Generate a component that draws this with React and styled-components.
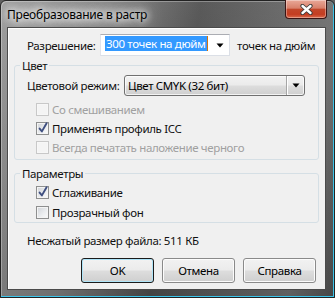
import React from "react";
import styled, { createGlobalStyle } from "styled-components";

const GlobalStyle = createGlobalStyle`
  html, body { margin: 0; padding: 0; background: #5e5e5e; }
  body {
    font-family: "Segoe UI", "Noto Sans", "Open Sans", sans-serif;
    font-size: 11.5px;
    letter-spacing: -0.35px;
    color: #111;
    white-space: nowrap;
  }
  * { box-sizing: border-box; }
`;

const Window = styled.div`
  width: 335px;
  height: 298px;
  display: flex;
  flex-direction: column;
  padding: 0 8px 7px 6px;
  border: 1px solid #222;
  border-radius: 6px 6px 0 0;
  background:
    linear-gradient(180deg, rgba(255, 255, 255, 0.08), rgba(0, 0, 0, 0.12)),
    linear-gradient(100deg, #979797 0%, #7d7d7d 28%, #4c4c4c 52%, #5e5e5e 72%, #6c6c6c 88%, #505050 100%);
  box-shadow: inset -1px -1px 0 #3cc6ec, inset 1px 1px 0 rgba(255, 255, 255, 0.3);
`;

const TitleBar = styled.div`
  height: 26px;
  display: flex;
  align-items: flex-start;
  justify-content: space-between;
`;

const Title = styled.span`
  margin-top: 6px;
  line-height: 15px;
  font-size: 12px;
  letter-spacing: -0.2px;
  color: #000;
  text-shadow: 0 0 6px #fff, 0 0 10px #fff, 0 0 16px #fff, 0 0 20px rgba(255, 255, 255, 0.9);
`;

const CloseButton = styled.div`
  width: 42px;
  height: 19px;
  margin: -1px -1px 0 0;
  display: flex;
  align-items: center;
  justify-content: center;
  border: 1px solid #3a1414;
  border-top: none;
  border-radius: 0 0 4px 4px;
  background: linear-gradient(180deg, #e9a898 0%, #d8806b 45%, #c2462a 52%, #c43d22 80%, #da6a4c 100%);
  box-shadow: inset 0 0 0 1px rgba(255, 255, 255, 0.35);
`;

const Client = styled.div`
  flex: 1;
  display: flex;
  flex-direction: column;
  background: #f0f0f0;
  border: 1px solid #4a4a4a;
  box-shadow: inset 1px 1px 0 #fff;
`;

const Row = styled.div`
  display: flex;
  align-items: center;
  height: ${(p) => p.$h || 22}px;
  padding-left: ${(p) => p.$pad || 0}px;
  margin-top: ${(p) => p.$mt || 0}px;
`;

const Label = styled.span`
  width: ${(p) => p.$w}px;
  flex-shrink: 0;
`;

const EditCombo = styled.div`
  width: 130px;
  height: 22px;
  flex-shrink: 0;
  display: flex;
  align-items: flex-start;
  justify-content: space-between;
  background: #fff;
  border: 1px solid #dbdfe6;
  border-top-color: #abadb3;
  border-left-color: #e2e3ea;
`;

const Selected = styled.span`
  margin: 1px 0 0 4px;
  height: 15px;
  line-height: 15px;
  padding: 0 1px;
  background: #3399ff;
  color: #fff;
  border-right: 1px solid #d2730f;
`;

const Arrow = styled.svg`
  width: 8px;
  height: 5px;
  align-self: center;
  margin-right: ${(p) => p.$mr || 0}px;
`;

const Suffix = styled.span`
  margin-left: 7px;
`;

const Group = styled.fieldset`
  margin: ${(p) => p.$mt}px 0 0 6px;
  width: 305px;
  padding: 0 0 ${(p) => p.$pb}px 0;
  border: 1px solid #d5dfe5;
  border-radius: 3px;
  min-inline-size: 0;
`;

const Legend = styled.legend`
  margin-left: 5px;
  padding: 0 2px;
  line-height: 15px;
`;

const GroupBody = styled.div`
  display: flex;
  flex-direction: column;
  padding: ${(p) => p.$pt}px 0 0 12px;
`;

const SelectCombo = styled.div`
  width: 181px;
  height: 21px;
  display: flex;
  align-items: stretch;
  border: 1px solid #707070;
  border-radius: 3px;
  background: linear-gradient(180deg, #f2f2f2 0%, #ebebeb 48%, #dddddd 52%, #cfcfcf 100%);
  box-shadow: inset 0 0 0 1px rgba(255, 255, 255, 0.75);
`;

const SelectText = styled.span`
  flex: 1;
  display: flex;
  align-items: center;
  padding-left: 3px;
  color: #000;
`;

const DropPart = styled.span`
  width: 18px;
  display: flex;
  align-items: center;
  justify-content: center;
  border-left: 1px solid #a6a6a6;
  box-shadow: inset 1px 0 0 #fff;
`;

const CheckRow = styled.label`
  display: flex;
  align-items: center;
  height: ${(p) => p.$h}px;
  padding-left: 9px;
  color: ${(p) => (p.$disabled ? "#a0a0a0" : "#111")};
`;

const Box = styled.span`
  position: relative;
  width: 13px;
  height: 13px;
  margin-right: 3px;
  flex-shrink: 0;
  border: 1px solid ${(p) => (p.$disabled ? "#c8c8c8" : "#8e8f8f")};
  background: ${(p) =>
    p.$disabled
      ? "#f4f4f4"
      : "linear-gradient(135deg, #d0d3d8 0%, #eceef0 60%, #fbfbfb 100%)"};
  box-shadow: inset 0 0 0 1px ${(p) => (p.$disabled ? "#f7f7f7" : "#f4f4f4")};
`;

const Tick = styled.svg`
  position: absolute;
  left: 0;
  top: -2px;
  width: 12px;
  height: 13px;
`;

const Info = styled.div`
  margin-top: 10px;
  padding-left: 19px;
  line-height: 15px;
`;

const Buttons = styled.div`
  display: flex;
  justify-content: flex-end;
  gap: 8px;
  margin-top: 10px;
  padding-right: 9px;
`;

const Button = styled.button`
  width: 73px;
  height: 25px;
  padding: 0;
  font: inherit;
  letter-spacing: inherit;
  color: #000;
  border: 1px solid ${(p) => (p.$default ? "#1b1b1b" : "#8a8a8a")};
  border-radius: 3px;
  background: linear-gradient(180deg, #f2f2f2 0%, #ebebeb 48%, #dddddd 52%, #cfcfcf 100%);
  box-shadow: inset 0 0 0 1px ${(p) => (p.$default ? "#aee4f8" : "#fcfcfc")};
`;

const DownArrow = ({ mr }) => (
  <Arrow $mr={mr} viewBox="0 0 8 5">
    <path d="M0.5 0.5 H7.5 L4 4.5 Z" fill="#000" />
  </Arrow>
);

const Check = ({ label, checked, disabled, h }) => (
  <CheckRow $h={h} $disabled={disabled}>
    <Box $disabled={disabled}>
      {checked && (
        <Tick viewBox="0 0 12 13">
          <path
            d="M2.6 7.6 L4.9 10.4 L9.6 2.2"
            fill="none"
            stroke="#3f4f80"
            strokeWidth="1.9"
            strokeLinecap="round"
            strokeLinejoin="round"
          />
        </Tick>
      )}
    </Box>
    {label}
  </CheckRow>
);

export default function App() {
  return (
    <>
      <GlobalStyle />
      <Window>
        <TitleBar>
          <Title>Преобразование в растр</Title>
          <CloseButton>
            <svg width="13" height="11" viewBox="0 0 13 11">
              <path d="M2.5 2 L10.5 9 M10.5 2 L2.5 9" stroke="#3a3a3a" strokeWidth="4.2" strokeLinecap="round" />
              <path d="M2.5 2 L10.5 9 M10.5 2 L2.5 9" stroke="#fff" strokeWidth="2.4" strokeLinecap="round" />
            </svg>
          </CloseButton>
        </TitleBar>
        <Client>
          <Row $mt={6} $pad={19}>
            <Label $w={73}>Разрешение:</Label>
            <EditCombo>
              <Selected>300 точек на дюйм</Selected>
              <DownArrow mr={5} />
            </EditCombo>
            <Suffix>точек на дюйм</Suffix>
          </Row>

          <Group $mt={2} $pb={2}>
            <Legend>Цвет</Legend>
            <GroupBody $pt={2}>
              <Row $h={21}>
                <Label $w={97}>Цветовой режим:</Label>
                <SelectCombo>
                  <SelectText>Цвет CMYK (32 бит)</SelectText>
                  <DropPart>
                    <DownArrow />
                  </DropPart>
                </SelectCombo>
              </Row>
              <Row $h={4} />
              <Check h={19} disabled label="Со смешиванием" />
              <Check h={19} checked label="Применять профиль ICC" />
              <Check h={19} disabled label="Всегда печатать наложение черного" />
            </GroupBody>
          </Group>

          <Group $mt={6} $pb={0}>
            <Legend>Параметры</Legend>
            <GroupBody $pt={1}>
              <Check h={20} checked label="Сглаживание" />
              <Check h={20} label="Прозрачный фон" />
            </GroupBody>
          </Group>

          <Info>Несжатый размер файла: 511 КБ</Info>

          <Buttons>
            <Button $default>OK</Button>
            <Button>Отмена</Button>
            <Button>Справка</Button>
          </Buttons>
        </Client>
      </Window>
    </>
  );
}
